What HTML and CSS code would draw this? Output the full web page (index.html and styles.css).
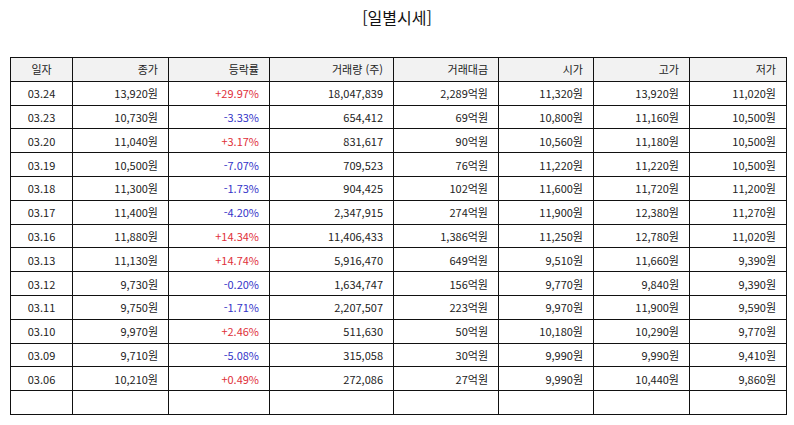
FILE: index.html
```html
<!DOCTYPE html>
<html lang="ko">
<head>
<meta charset="utf-8">
<title>일별시세</title>
<link rel="stylesheet" href="styles.css">
</head>
<body>
<div class="page">
  <h1 class="title">[일별시세]</h1>
  <table class="quotes">
    <colgroup>
      <col class="c-date"><col class="c-close"><col class="c-rate"><col class="c-vol"><col class="c-amt"><col class="c-open"><col class="c-high"><col class="c-low">
    </colgroup>
    <thead>
      <tr><th class="center">일자</th><th>종가</th><th>등락률</th><th>거래량 (주)</th><th>거래대금</th><th>시가</th><th>고가</th><th>저가</th></tr>
    </thead>
    <tbody>
      <tr><td class="center">03.24</td><td>13,920원</td><td class="up">+29.97%</td><td>18,047,839</td><td>2,289억원</td><td>11,320원</td><td>13,920원</td><td>11,020원</td></tr>
      <tr><td class="center">03.23</td><td>10,730원</td><td class="down">-3.33%</td><td>654,412</td><td>69억원</td><td>10,800원</td><td>11,160원</td><td>10,500원</td></tr>
      <tr><td class="center">03.20</td><td>11,040원</td><td class="up">+3.17%</td><td>831,617</td><td>90억원</td><td>10,560원</td><td>11,180원</td><td>10,500원</td></tr>
      <tr><td class="center">03.19</td><td>10,500원</td><td class="down">-7.07%</td><td>709,523</td><td>76억원</td><td>11,220원</td><td>11,220원</td><td>10,500원</td></tr>
      <tr><td class="center">03.18</td><td>11,300원</td><td class="down">-1.73%</td><td>904,425</td><td>102억원</td><td>11,600원</td><td>11,720원</td><td>11,200원</td></tr>
      <tr><td class="center">03.17</td><td>11,400원</td><td class="down">-4.20%</td><td>2,347,915</td><td>274억원</td><td>11,900원</td><td>12,380원</td><td>11,270원</td></tr>
      <tr><td class="center">03.16</td><td>11,880원</td><td class="up">+14.34%</td><td>11,406,433</td><td>1,386억원</td><td>11,250원</td><td>12,780원</td><td>11,020원</td></tr>
      <tr><td class="center">03.13</td><td>11,130원</td><td class="up">+14.74%</td><td>5,916,470</td><td>649억원</td><td>9,510원</td><td>11,660원</td><td>9,390원</td></tr>
      <tr><td class="center">03.12</td><td>9,730원</td><td class="down">-0.20%</td><td>1,634,747</td><td>156억원</td><td>9,770원</td><td>9,840원</td><td>9,390원</td></tr>
      <tr><td class="center">03.11</td><td>9,750원</td><td class="down">-1.71%</td><td>2,207,507</td><td>223억원</td><td>9,970원</td><td>11,900원</td><td>9,590원</td></tr>
      <tr><td class="center">03.10</td><td>9,970원</td><td class="up">+2.46%</td><td>511,630</td><td>50억원</td><td>10,180원</td><td>10,290원</td><td>9,770원</td></tr>
      <tr><td class="center">03.09</td><td>9,710원</td><td class="down">-5.08%</td><td>315,058</td><td>30억원</td><td>9,990원</td><td>9,990원</td><td>9,410원</td></tr>
      <tr><td class="center">03.06</td><td>10,210원</td><td class="up">+0.49%</td><td>272,086</td><td>27억원</td><td>9,990원</td><td>10,440원</td><td>9,860원</td></tr>
      <tr class="empty"><td></td><td></td><td></td><td></td><td></td><td></td><td></td><td></td></tr>
    </tbody>
  </table>
</div>
</body>
</html>
```
FILE: styles.css
```css
html, body {
  margin: 0;
  padding: 0;
  background: #ffffff;
}
body {
  font-family: "Noto Sans CJK KR", "Noto Sans", "Liberation Sans", sans-serif;
  color: #222222;
}
.page {
  padding: 6px 0 0 10px;
}
.title {
  margin: 0 0 0 -10px;
  font-size: 16px;
  font-weight: normal;
  line-height: 22px;
  text-align: center;
  color: #111111;
  height: 51px;
}
.quotes {
  width: 776px;
  table-layout: fixed;
  border-collapse: collapse;
  font-size: 11px;
}
.c-date { width: 62px; }
.c-close { width: 96px; }
.c-rate { width: 101px; }
.c-vol { width: 124px; }
.c-amt { width: 105px; }
.c-open { width: 95px; }
.c-high { width: 96px; }
.c-low { width: 97px; }
.quotes th,
.quotes td {
  border: 1px solid #111111;
  height: 22.8px;
  padding: 0 10px 0 4px;
  text-align: right;
  font-weight: normal;
  white-space: nowrap;
  line-height: 14px;
}
.quotes th {
  background: #f2f2f2;
}
.quotes .center {
  text-align: center;
  padding: 0;
}
.quotes .up { color: #e0303a; }
.quotes .down { color: #3434c8; }
```
